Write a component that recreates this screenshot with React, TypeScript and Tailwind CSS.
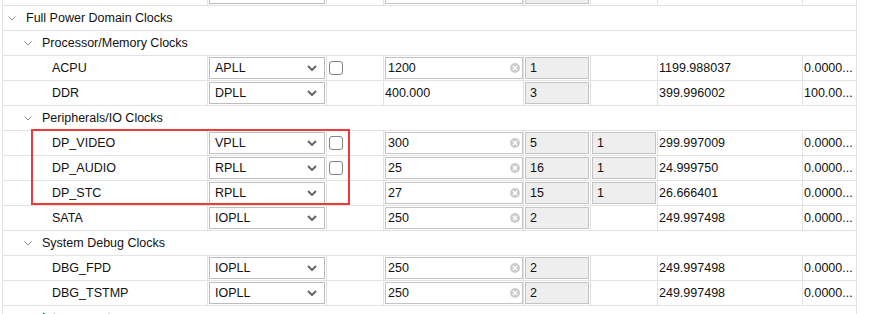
const COLS = 'grid grid-cols-[205px_119px_57px_140px_67px_67px_145px_53px]';
const LINE = 'border-[#e2e2e2]';

type Group = { kind: 'group'; label: string; level: 1 | 2 };
type Data = {
  kind: 'data';
  name: string;
  src: string;
  check?: boolean;
  req: string;
  reqPlain?: boolean;
  d0?: string;
  d1?: string;
  actual: string;
  err: string;
};

// first row is scrolled mostly out of view: only the bottoms of its boxes show
const rows: (Group | Data)[] = [
  { kind: 'data', name: '', src: '', req: '', d0: ' ', actual: '', err: '' },
  { kind: 'group', label: 'Full Power Domain Clocks', level: 1 },
  { kind: 'group', label: 'Processor/Memory Clocks', level: 2 },
  { kind: 'data', name: 'ACPU', src: 'APLL', check: true, req: '1200', d0: '1', actual: '1199.988037', err: '0.0000...' },
  { kind: 'data', name: 'DDR', src: 'DPLL', req: '400.000', reqPlain: true, d0: '3', actual: '399.996002', err: '100.00...' },
  { kind: 'group', label: 'Peripherals/IO Clocks', level: 2 },
  { kind: 'data', name: 'DP_VIDEO', src: 'VPLL', check: true, req: '300', d0: '5', d1: '1', actual: '299.997009', err: '0.0000...' },
  { kind: 'data', name: 'DP_AUDIO', src: 'RPLL', check: true, req: '25', d0: '16', d1: '1', actual: '24.999750', err: '0.0000...' },
  { kind: 'data', name: 'DP_STC', src: 'RPLL', req: '27', d0: '15', d1: '1', actual: '26.666401', err: '0.0000...' },
  { kind: 'data', name: 'SATA', src: 'IOPLL', req: '250', d0: '2', actual: '249.997498', err: '0.0000...' },
  { kind: 'group', label: 'System Debug Clocks', level: 2 },
  { kind: 'data', name: 'DBG_FPD', src: 'IOPLL', req: '250', d0: '2', actual: '249.997498', err: '0.0000...' },
  { kind: 'data', name: 'DBG_TSTMP', src: 'IOPLL', req: '250', d0: '2', actual: '249.997498', err: '0.0000...' },
  { kind: 'group', label: 'Interconnect', level: 2 },
];

const TreeChevron = () => (
  <svg width="8" height="5" viewBox="0 0 8 5" className="shrink-0">
    <path d="M0.5 0.5L4 4L7.5 0.5" fill="none" stroke="#8c8c8c" strokeWidth="1" />
  </svg>
);

const SelectChevron = () => (
  <svg width="10" height="6" viewBox="0 0 10 6" className="shrink-0">
    <path d="M1 1L5 5L9 1" fill="none" stroke="#666" strokeWidth="2" />
  </svg>
);

const ClearIcon = () => (
  <svg width="10" height="10" viewBox="0 0 10 10" className="shrink-0">
    <circle cx="5" cy="5" r="5" fill="#cdcdcd" />
    <path d="M3 3L7 7M7 3L3 7" stroke="#fff" strokeWidth="1.4" />
  </svg>
);

const Cell = ({ children, last }: { children?: React.ReactNode; last?: boolean }) => (
  <div className={`h-full min-w-0 p-[1px] ${last ? '' : `border-r ${LINE}`}`}>{children}</div>
);

const DataRow = ({ r, first }: { r: Data; first?: boolean }) => (
  <div className={`${COLS} h-[25px] border-b ${LINE} ${first ? '-mt-[19px]' : ''}`}>
    <Cell>
      <div className="flex h-full items-center pl-[48px]">{r.name}</div>
    </Cell>
    <Cell>
      <div className="flex h-full items-center justify-between border border-[#bdbdbd] bg-white pl-[5px] pr-[7px]">
        <span>{r.src}</span>
        {!first && <SelectChevron />}
      </div>
    </Cell>
    <Cell>
      {r.check && (
        <div className="flex h-full items-center pl-[1px]">
          <div className="h-[14px] w-[14px] rounded-[3px] border border-[#858585] bg-white" />
        </div>
      )}
    </Cell>
    <Cell>
      {r.reqPlain ? (
        <div className="flex h-full items-center">{r.req}</div>
      ) : (
        <div className="mr-[-1px] flex h-full items-center justify-between border border-[#c4c4c4] bg-white pl-[2px] pr-[2px]">
          <span>{r.req}</span>
          {!first && <ClearIcon />}
        </div>
      )}
    </Cell>
    <Cell>
      {r.d0 && (
        <div className="flex h-full items-center border border-[#c4c4c4] bg-[#eeeeee] pl-[4px]">{r.d0}</div>
      )}
    </Cell>
    <Cell>
      {r.d1 && (
        <div className="flex h-full items-center border border-[#c4c4c4] bg-[#eeeeee] pl-[4px]">{r.d1}</div>
      )}
    </Cell>
    <Cell>
      <div className="flex h-full items-center">{r.actual}</div>
    </Cell>
    <Cell last>
      <div className="flex h-full items-center overflow-hidden whitespace-nowrap">{r.err}</div>
    </Cell>
  </div>
);

const GroupRow = ({ r }: { r: Group }) => (
  <div className={`flex h-[25px] items-center border-b ${LINE} ${r.level === 1 ? 'pl-[5px]' : 'pl-[21px]'}`}>
    <TreeChevron />
    <span className="ml-[10px]">{r.label}</span>
  </div>
);

export default function App() {
  return (
    <div
      className="relative h-[314px] w-[891px] overflow-hidden bg-white text-[12.5px] leading-none text-[#111]"
      style={{ fontFamily: '"Liberation Sans", Arial, sans-serif' }}
    >
      <div className={`ml-[2px] w-[855px] border-x ${LINE}`}>
        {rows.map((r, i) =>
          r.kind === 'group' ? <GroupRow key={i} r={r} /> : <DataRow key={i} r={r} first={i === 0} />
        )}
      </div>
      {/* highlight box */}
      <div className="absolute left-[31px] top-[129px] h-[76px] w-[319px] border-2 border-[#f03a3a]" />
    </div>
  );
}
